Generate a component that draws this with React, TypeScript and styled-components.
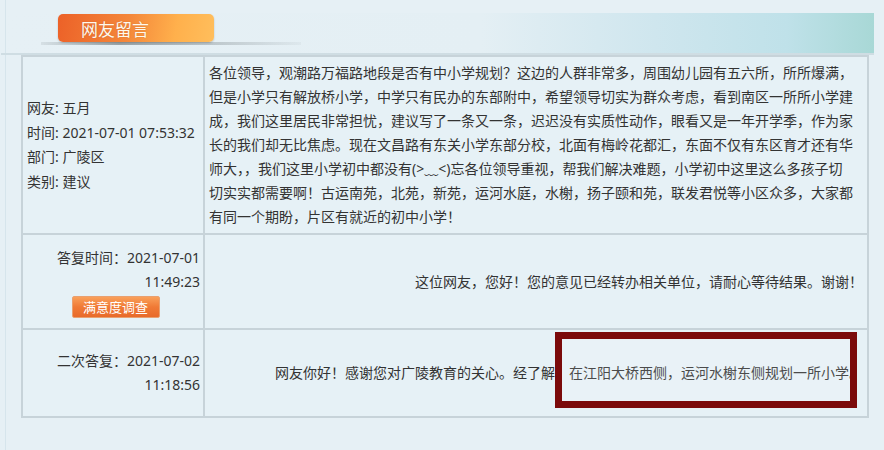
import React from "react";
import styled, { createGlobalStyle } from "styled-components";

const Global = createGlobalStyle`
  html, body { margin: 0; padding: 0; }
  body {
    background: #e6f0f5;
    font-family: "Noto Sans", "Noto Sans CJK SC", sans-serif;
    color: #333;
    width: 884px;
    height: 450px;
    overflow: hidden;
  }
`;

const Page = styled.div`
  position: relative;
  width: 884px;
  height: 450px;
  box-sizing: border-box;
  border-left: 1px solid #d6e5ec;
  margin-left: 5px;
  padding-left: 15px;
`;

const Header = styled.div`
  position: relative;
  height: 55px;
  margin-left: -20px;
  width: 873px;
`;

const Banner = styled.div`
  position: absolute;
  left: 0;
  right: 0;
  top: 13px;
  height: 40px;
  background: linear-gradient(
    to right,
    rgba(230, 240, 245, 0) 0%,
    #e4eff4 55%,
    #cfe6ee 75%,
    #bfe1e9 90%,
    #a8d8d6 100%
  );
  border-bottom: 2px solid #cfdde3;
`;

const TabShadow = styled.div`
  position: absolute;
  left: 40px;
  top: 42px;
  width: 260px;
  height: 3px;
  background: linear-gradient(to right, rgba(150, 160, 165, 0.2), #9aa4a8 30%, rgba(160, 170, 175, 0.1));
`;

const Tab = styled.div`
  position: absolute;
  left: 57px;
  top: 14px;
  width: 156px;
  height: 28px;
  border-radius: 5px;
  background: linear-gradient(100deg, #ec6128 0%, #f4873a 45%, #ffb04c 75%, #ffbe5c 100%);
  box-shadow: 0 1px 2px rgba(0, 0, 0, 0.2);
  display: flex;
  align-items: center;
  padding-left: 23px;
  box-sizing: border-box;
  color: #fff8ec;
  font-family: "Noto Sans CJK SC", sans-serif;
  font-size: 17px;
  text-shadow: 0 0 1px rgba(120, 50, 10, 0.4);
`;

const Table = styled.div`
  width: 848px;
  box-sizing: border-box;
  display: grid;
  grid-template-columns: 180px 1fr;
  grid-template-rows: 176px 93px 86px;
  gap: 2px;
  padding: 2px;
  background: #c7d3d9;
`;

const Cell = styled.div<{ $align?: "left" | "right" | "center" }>`
  background: #e6f1f6;
  display: flex;
  flex-direction: column;
  justify-content: center;
  align-items: ${(p) =>
    p.$align === "right" ? "flex-end" : p.$align === "center" ? "center" : "flex-start"};
  text-align: ${(p) => p.$align ?? "left"};
  font-size: 14px;
  line-height: 24px;
  padding: 0 3px 0 4px;
  box-sizing: border-box;
  position: relative;
`;

const Line = styled.span`
  display: block;
  white-space: nowrap;
`;

const MetaLine = styled.span`
  display: block;
  white-space: nowrap;
  line-height: 24.5px;
`;

const LeftStack = styled.div`
  display: flex;
  flex-direction: column;
  align-items: flex-end;
  width: 100%;
`;

const SurveyButton = styled.button`
  align-self: center;
  margin-top: 2px;
  width: 88px;
  height: 22px;
  border: 1px solid #e9a070;
  border-radius: 2px;
  background: linear-gradient(to bottom, #f9a05a 0%, #f07a36 50%, #e86a2a 100%);
  color: #fff;
  font-family: "Noto Sans CJK SC", sans-serif;
  font-size: 13px;
  line-height: 20px;
  padding: 0;
  transform: translateX(2px);
`;

const ReplyText = styled.div`
  white-space: nowrap;
  padding-right: 1px;
`;

const Highlight = styled.div`
  position: absolute;
  left: 549px;
  top: 332px;
  width: 302px;
  height: 76px;
  box-sizing: border-box;
  border: 7px solid #7b0a0a;
  background: rgba(255, 255, 255, 0.12);
  pointer-events: none;
`;

const bodyLines = [
  "各位领导，观潮路万福路地段是否有中小学规划？这边的人群非常多，周围幼儿园有五六所，所所爆满，",
  "但是小学只有解放桥小学，中学只有民办的东部附中，希望领导切实为群众考虑，看到南区一所所小学建",
  "成，我们这里居民非常担忧，建议写了一条又一条，迟迟没有实质性动作，眼看又是一年开学季，作为家",
  "长的我们却无比焦虑。现在文昌路有东关小学东部分校，北面有梅岭花都汇，东面不仅有东区育才还有华",
  "师大，，我们这里小学初中都没有(>﹏<)忘各位领导重视，帮我们解决难题，小学初中这里这么多孩子切",
  "切实实都需要啊！古运南苑，北苑，新苑，运河水庭，水榭，扬子颐和苑，联发君悦等小区众多，大家都",
  "有同一个期盼，片区有就近的初中小学！",
];

const meta = ["网友: 五月", "时间: 2021-07-01 07:53:32", "部门: 广陵区", "类别: 建议"];

export default function App() {
  return (
    <>
      <Global />
      <Page>
        <Header>
          <Banner />
          <TabShadow />
          <Tab>网友留言</Tab>
        </Header>
        <Table>
          <Cell $align="left">
            {meta.map((m) => (
              <MetaLine key={m}>{m}</MetaLine>
            ))}
          </Cell>
          <Cell $align="left">
            {bodyLines.map((l, i) => (
              <Line key={i}>{l}</Line>
            ))}
          </Cell>

          <Cell $align="right">
            <LeftStack>
              <Line>答复时间：2021-07-01</Line>
              <Line>11:49:23</Line>
              <SurveyButton>满意度调查</SurveyButton>
            </LeftStack>
          </Cell>
          <Cell $align="right">
            <ReplyText>这位网友，您好！您的意见已经转办相关单位，请耐心等待结果。谢谢！</ReplyText>
          </Cell>

          <Cell $align="right">
            <Line>二次答复：2021-07-02</Line>
            <Line>11:18:56</Line>
          </Cell>
          <Cell $align="right">
            <ReplyText>网友你好！感谢您对广陵教育的关心。经了解，在江阳大桥西侧，运河水榭东侧规划一所小学。</ReplyText>
          </Cell>
        </Table>
        <Highlight />
      </Page>
    </>
  );
}
